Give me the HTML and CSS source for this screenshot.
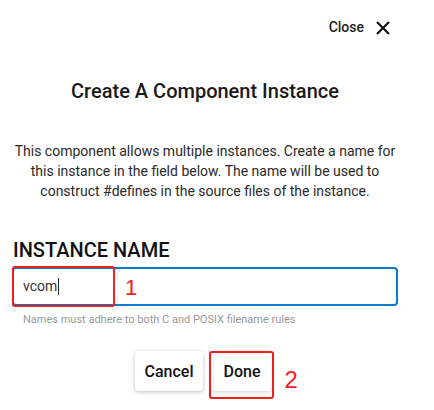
FILE: index.html
```html
<!DOCTYPE html>
<html>
<head>
<meta charset="utf-8">
<link rel="stylesheet" href="styles.css">
</head>
<body>
<div class="dialog">
  <div class="topbar">
    <span class="close-label">Close</span>
    <svg class="close-icon" width="14" height="14" viewBox="0 0 14 14"><path d="M1 1L13 13M13 1L1 13" stroke="#111" stroke-width="2.2" fill="none"/></svg>
  </div>
  <h1 class="title">Create A Component Instance</h1>
  <p class="desc">This component allows multiple instances. Create a name for this instance in the field below. The name will be used to construct #defines in the source files of the instance.</p>
  <div class="field-label">INSTANCE NAME</div>
  <div class="field-wrap">
    <div class="field"><span class="value">vcom</span><span class="caret"></span></div>
    <div class="anno-box anno-box-1"></div>
    <span class="anno-num anno-num-1">1</span>
  </div>
  <div class="helper">Names must adhere to both C and POSIX filename rules</div>
  <div class="actions">
    <button class="btn btn-cancel">Cancel</button>
    <div class="done-wrap">
      <button class="btn btn-done">Done</button>
      <div class="anno-box anno-box-2"></div>
      <span class="anno-num anno-num-2">2</span>
    </div>
  </div>
</div>
</body>
</html>
```

FILE: styles.css
```css
html, body {
  margin: 0;
  padding: 0;
  background: #ffffff;
}
body {
  font-family: Roboto, "Liberation Sans", sans-serif;
  color: #1f1f1f;
  width: 434px;
  height: 410px;
  overflow: hidden;
}
.dialog {
  padding: 17px 36px 0 12px;
}
.topbar {
  display: flex;
  justify-content: flex-end;
  align-items: center;
  gap: 12px;
  padding-right: 8px;
  height: 20px;
}
.close-label {
  font-size: 14px;
  line-height: 20px;
  font-weight: 500;
  color: #222;
}
.close-icon {
  display: block;
  margin-top: 1px;
}
.title {
  margin: 42px 0 0;
  font-size: 20px;
  line-height: 24px;
  font-weight: 500;
  text-align: center;
  color: #1a1a1a;
}
.desc {
  margin: 38px 0 0;
  font-size: 14px;
  line-height: 20px;
  text-align: center;
  color: #2a2a2a;
}
.field-label {
  margin-top: 37px;
  font-size: 20px;
  line-height: 24px;
  font-weight: 500;
  color: #111;
  padding-left: 1px;
}
.field-wrap {
  position: relative;
  margin-top: 5px;
}
.field {
  height: 35px;
  border: 2px solid #0a7ad1;
  border-radius: 4px;
  display: flex;
  align-items: center;
  padding-left: 9px;
}
.value {
  font-size: 14px;
  line-height: 35px;
  color: #333;
}
.caret {
  display: inline-block;
  width: 1px;
  height: 17px;
  background: #222;
  margin-left: 1px;
}
.anno-box {
  position: absolute;
  border: 2.5px solid #f21d1d;
  border-radius: 3px;
  box-sizing: border-box;
}
.anno-box-1 {
  left: 0;
  top: -1px;
  width: 103px;
  height: 41px;
}
.anno-num {
  position: absolute;
  font-family: "Liberation Sans", Arial, sans-serif;
  color: #f21d1d;
  line-height: 1;
}
.anno-num-1 {
  left: 113px;
  top: 10px;
  font-size: 22px;
}
.helper {
  margin-top: 7px;
  padding-left: 11px;
  font-size: 11px;
  line-height: 14px;
  color: #999;
}
.actions {
  margin-top: 24px;
  display: flex;
  justify-content: center;
  gap: 8px;
  padding-right: 3px;
}
.btn {
  font-family: Roboto, "Liberation Sans", sans-serif;
  font-size: 16px;
  font-weight: 500;
  color: #111;
  background: #fff;
  border: none;
  border-radius: 4px;
  height: 40px;
  padding: 0 10px;
  cursor: pointer;
}
.btn-cancel {
  box-shadow: 0 1px 4px rgba(0,0,0,0.25);
}
.btn-done {
  padding: 0 12px;
  box-shadow: 0 1px 4px rgba(0,0,0,0.2);
}
.done-wrap {
  position: relative;
}
.anno-box-2 {
  left: -2px;
  top: 0;
  right: -2px;
  height: 48px;
}
.anno-num-2 {
  left: 73px;
  top: 17px;
  font-size: 24px;
}
```
